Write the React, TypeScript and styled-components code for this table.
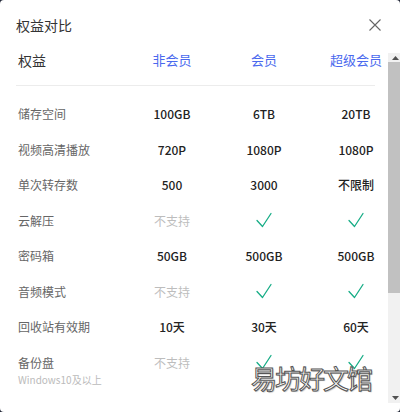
import React from "react";
import styled, { createGlobalStyle } from "styled-components";

const Global = createGlobalStyle`
  html, body { margin: 0; padding: 0; overflow: hidden; background: #232838; }
  body { width: 400px; height: 412px; font-family: "Noto Sans CJK SC", "Noto Sans", sans-serif; }
`;

const Dialog = styled.div`
  position: relative;
  width: 400px;
  height: 412px;
  background: #fff;
  border-radius: 4px;
  display: flex;
  flex-direction: column;
  overflow: hidden;
`;

const TitleBar = styled.div`
  height: 51px;
  flex: none;
  display: flex;
  align-items: center;
  justify-content: space-between;
  padding: 0 18px 0 16px;
  box-sizing: border-box;
`;

const Title = styled.div`
  font-size: 14px;
  color: #333;
  line-height: 18px;
  margin-top: -2px;
`;

const Close = styled.button`
  border: 0;
  background: none;
  padding: 0;
  width: 14px;
  height: 14px;
  margin-top: -1px;
  display: flex;
`;

const Body = styled.div`
  height: 352px;
  flex: none;
  display: flex;
`;

const Main = styled.div`
  flex: 1;
  min-width: 0;
  overflow: hidden;
`;

const Rail = styled.div`
  width: 12px;
  flex: none;
  margin-top: 2px;
  background: #f1f1f1;
  display: flex;
  flex-direction: column;
`;

const RailButton = styled.div<{ $h: number }>`
  height: ${(p) => p.$h}px;
  flex: none;
  display: flex;
  align-items: center;
  padding-left: 4px;
`;

const Track = styled.div`
  flex: 1;
  display: flex;
  flex-direction: column;
`;

const Thumb = styled.div`
  height: 231px;
  background: #c1c1c1;
`;

const Grid = styled.div`
  display: grid;
  grid-template-columns: 94px 64px 64px 64px;
  column-gap: 28px;
  padding-left: 18px;
`;

const HeadRow = styled(Grid)`
  height: 34px;
  align-items: start;
`;

const Divider = styled.div`
  height: 1px;
  background: #ececec;
  margin: 0 13px 10px 16px;
`;

const HeadCell = styled.div<{ $accent?: boolean }>`
  font-size: ${(p) => (p.$accent ? "13px" : "14px")};
  line-height: 18px;
  color: ${(p) => (p.$accent ? "#4a69ee" : "#333")};
  text-align: ${(p) => (p.$accent ? "center" : "left")};
  white-space: nowrap;
`;

const Row = styled(Grid)`
  min-height: 35.5px;
  align-items: start;
`;

const Label = styled.div`
  font-size: 12px;
  line-height: 35.5px;
  color: #666;
  white-space: nowrap;
`;

const Sub = styled.span`
  display: block;
  font-size: 10px;
  line-height: 12px;
  margin-top: -6px;
  color: #bbb;
`;

const Value = styled.div<{ $muted?: boolean }>`
  font-size: 12px;
  line-height: 35.5px;
  height: 35.5px;
  white-space: nowrap;
  color: ${(p) => (p.$muted ? "#bdbdbd" : "#222")};
  font-weight: ${(p) => (p.$muted ? 400 : 500)};
  display: flex;
  align-items: center;
  justify-content: center;
`;

const Watermark = styled.div`
  position: absolute;
  left: 251px;
  top: 362px;
  font-size: 26px;
  line-height: 32px;
  letter-spacing: -2px;
  color: #fff;
  -webkit-text-stroke: 1px #555;
  text-shadow: 1px 1px 1px rgba(0, 0, 0, 0.25);
  pointer-events: none;
`;

const Check = () => (
  <svg width="16" height="16" viewBox="0 0 16 16" fill="none">
    <path d="M1 8.5 L6.5 14.5 L15 1.5" stroke="#17ad86" strokeWidth="1.3" strokeLinecap="round" strokeLinejoin="round" />
  </svg>
);

const Arrow = ({ down }: { down?: boolean }) => (
  <svg width="7" height="4" viewBox="0 0 7 4">
    <path d={down ? "M0 0 L3.5 4 L7 0Z" : "M0 4 L3.5 0 L7 4Z"} fill="#505050" />
  </svg>
);

const rows: { label: string; sub?: string; cells: string[] }[] = [
  { label: "储存空间", cells: ["100GB", "6TB", "20TB"] },
  { label: "视频高清播放", cells: ["720P", "1080P", "1080P"] },
  { label: "单次转存数", cells: ["500", "3000", "不限制"] },
  { label: "云解压", cells: ["no", "check", "check"] },
  { label: "密码箱", cells: ["50GB", "500GB", "500GB"] },
  { label: "音频模式", cells: ["no", "check", "check"] },
  { label: "回收站有效期", cells: ["10天", "30天", "60天"] },
  { label: "备份盘", sub: "Windows10及以上", cells: ["no", "check", "check"] },
];

export default function App() {
  return (
    <>
      <Global />
      <Dialog>
        <TitleBar>
          <Title>权益对比</Title>
          <Close aria-label="关闭">
            <svg width="14" height="14" viewBox="0 0 14 14">
              <path d="M1.5 1.5 L12.5 12.5 M12.5 1.5 L1.5 12.5" stroke="#666" strokeWidth="1.1" />
            </svg>
          </Close>
        </TitleBar>
        <Body>
          <Main>
            <HeadRow>
              <HeadCell>权益</HeadCell>
              <HeadCell $accent>非会员</HeadCell>
              <HeadCell $accent>会员</HeadCell>
              <HeadCell $accent>超级会员</HeadCell>
            </HeadRow>
            <Divider />
            {rows.map((r) => (
              <Row key={r.label}>
                <Label>
                  {r.label}
                  {r.sub && <Sub>{r.sub}</Sub>}
                </Label>
                {r.cells.map((c, i) =>
                  c === "check" ? (
                    <Value key={i}>
                      <Check />
                    </Value>
                  ) : c === "no" ? (
                    <Value key={i} $muted>
                      不支持
                    </Value>
                  ) : (
                    <Value key={i}>{c}</Value>
                  )
                )}
              </Row>
            ))}
          </Main>
          <Rail>
            <RailButton $h={9}>
              <Arrow />
            </RailButton>
            <Track>
              <Thumb />
            </Track>
            <RailButton $h={10}>
              <Arrow down />
            </RailButton>
          </Rail>
        </Body>
        <Watermark>易坊好文馆</Watermark>
      </Dialog>
    </>
  );
}
